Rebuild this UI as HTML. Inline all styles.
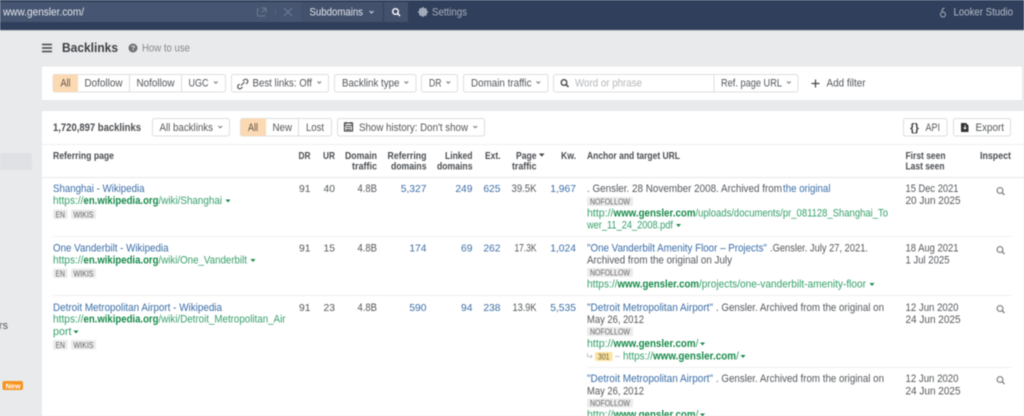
<!DOCTYPE html>
<html><head><meta charset="utf-8"><title>Backlinks</title>
<style>
html,body{margin:0;padding:0;width:1024px;height:416px;overflow:hidden;background:#e9eaec}
svg{display:block;filter:blur(.4px)}
text{font-family:"Liberation Sans",sans-serif;font-size:10.8px;fill:#54575b;white-space:pre}
.b{font-weight:bold}
.h{font-weight:bold;font-size:10px;fill:#4a4d51}
.l{fill:#3a6da6}
.g{fill:#36a06a}
.gb{fill:#17894a;font-weight:bold}
.t{font-size:8.5px;fill:#666}
.e{text-anchor:end}
.n{font-size:10.3px}
.btn{fill:#fff;stroke:#dcdee1;stroke-width:1}
.tag{fill:#ebebeb}
.sep{stroke:#eff0f1;stroke-width:1}
.ic{fill:none;stroke:#85888c;stroke-width:1.5}
</style></head><body>
<svg width="1024" height="416" viewBox="0 0 1024 416" xmlns="http://www.w3.org/2000/svg">
<!-- top bar -->
<rect width="1024" height="30" fill="#303f5b"/>
<rect y="30" width="1024" height="1" fill="#c9ccd2"/>
<rect y="2" width="301" height="20" fill="#465571"/>
<rect x="301" y="2" width="82" height="20" fill="#43516d"/>
<rect x="384" y="2" width="24" height="20" fill="#43516d"/>
<text x="3" y="15.500" textLength="81" style="font-size:11px;fill:#e6e9ee">www.gensler.com/</text>
<path d="M259 9h-1.500v7h7v-1.500M261 8h5v5M266 8l-4.500 4.500" fill="none" stroke="#6d7a92" stroke-width="1"/>
<path d="M284 8l8 8M292 8l-8 8" stroke="#6d7a92" stroke-width="1.200"/>
<rect x="275" y="9" width="1" height="6" fill="#55637e"/>
<text x="309.500" y="15.500" textLength="53.500" style="fill:#e3e6eb">Subdomains</text>
<path d="M369.500 11l2 2 2-2" fill="none" stroke="#d5d9e0" stroke-width="1"/>
<circle cx="395.500" cy="11.500" r="2.800" fill="none" stroke="#fff" stroke-width="1.400"/><path d="M397.500 13.500l2.500 2.500" stroke="#fff" stroke-width="1.500"/>
<circle cx="423" cy="12" r="3.200" fill="none" stroke="#a7afbd" stroke-width="2.200"/><path d="M423 7v10M418 12h10M419.500 8.500l7 7M426.500 8.500l-7 7" stroke="#a7afbd" stroke-width="1.200"/>
<text x="432" y="15.500" textLength="35" style="fill:#a7afbd">Settings</text>
<circle cx="943" cy="14.500" r="2.500" fill="none" stroke="#a7afbd" stroke-width="1"/><path d="M942 11.500c0-2 .5-3 2.500-3.500" fill="none" stroke="#a7afbd" stroke-width="1"/>
<text x="953.500" y="15.500" textLength="59.500" style="fill:#b4bbc7">Looker Studio</text>
<!-- sidebar -->
<rect x="0" y="153" width="32" height="17" rx="2" fill="#dfe1e4"/>
<text x="-1" y="329" style="fill:#55585c">rs</text>
<rect x="2.500" y="381" width="20.500" height="9" rx="2" fill="#f6931e"/>
<text x="5.500" y="388.500" textLength="15" class="b" style="font-size:7.500px;fill:#fff">New</text>
<!-- heading -->
<path d="M42 44.500h10M42 48h10M42 51.500h10" stroke="#444" stroke-width="1.400"/>
<text x="62" y="52" textLength="56" class="b" style="font-size:12.500px;fill:#3c3f43">Backlinks</text>
<circle cx="133" cy="48" r="4.500" fill="#6e7175"/><text x="131" y="50.500" class="b" style="font-size:7px;fill:#e9eaec">?</text>
<text x="142" y="51.500" textLength="48" style="fill:#85888c">How to use</text>
<!-- filter panel -->
<rect x="42" y="66.500" width="980" height="33.500" fill="#fff"/>
<rect x="53" y="74.500" width="172.500" height="17.500" rx="2" class="btn"/>
<rect x="53" y="74.500" width="25" height="17.500" rx="2" fill="#fbd9b3"/>
<path d="M129.500 75v17M181.500 75v17" stroke="#dcdee1"/>
<text x="60.500" y="86.500" textLength="10" style="fill:#5f5347">All</text>
<text x="84.500" y="86.500" textLength="38">Dofollow</text>
<text x="136.500" y="86.500" textLength="38">Nofollow</text>
<text x="188.500" y="86.500" textLength="20">UGC</text>
<path d="M214 81.500l1.800 1.800 1.800-1.800" fill="none" stroke="#666" stroke-width=".9"/>
<rect x="231.500" y="74.500" width="97" height="17.500" rx="2" class="btn"/>
<path d="M241 85.500l3.500-3.500M239.500 84l-1.200 1.200a2.100 2.100 0 0 0 3 3l1.200-1.200M243 81l1.200-1.200a2.100 2.100 0 0 1 3 3l-1.200 1.200" fill="none" stroke="#555" stroke-width="1.200"/>
<text x="252.500" y="86.500" textLength="59.500">Best links: Off</text>
<path d="M317.500 81.500l1.800 1.800 1.800-1.800" fill="none" stroke="#666" stroke-width=".9"/>
<rect x="334.500" y="74.500" width="81.500" height="17.500" rx="2" class="btn"/>
<text x="342" y="86.500" textLength="57.500">Backlink type</text>
<path d="M404.500 81.500l1.800 1.800 1.800-1.800" fill="none" stroke="#666" stroke-width=".9"/>
<rect x="421.500" y="74.500" width="36" height="17.500" rx="2" class="btn"/>
<text x="429" y="86.500" textLength="12.500">DR</text>
<path d="M446.500 81.500l1.800 1.800 1.800-1.800" fill="none" stroke="#666" stroke-width=".9"/>
<rect x="463.500" y="74.500" width="84.500" height="17.500" rx="2" class="btn"/>
<text x="471" y="86.500" textLength="60.500">Domain traffic</text>
<path d="M536.500 81.500l1.800 1.800 1.800-1.800" fill="none" stroke="#666" stroke-width=".9"/>
<rect x="553.500" y="74.500" width="244.500" height="17.500" rx="2" class="btn"/>
<path d="M714 75v17" stroke="#dcdee1"/>
<circle cx="564" cy="82.500" r="2.800" fill="none" stroke="#444" stroke-width="1.300"/><path d="M566 84.500l2.500 2.500" stroke="#444" stroke-width="1.500"/>
<text x="575" y="86.500" textLength="67" style="fill:#b5b7ba">Word or phrase</text>
<text x="721" y="86.500" textLength="61">Ref. page URL</text>
<path d="M787 81.500l1.800 1.800 1.800-1.800" fill="none" stroke="#666" stroke-width=".9"/>
<path d="M815.500 79.500v8M811.500 83.500h8" stroke="#444" stroke-width="1.200"/>
<text x="826.500" y="86.500" textLength="39">Add filter</text>
<!-- table panel -->
<rect x="42" y="111" width="982" height="305" fill="#fff"/>
<text x="53" y="131" textLength="88" class="b" style="fill:#4a4d51">1,720,897 backlinks</text>
<rect x="152.500" y="118.500" width="77" height="17.500" rx="2" class="btn"/>
<text x="159.500" y="131" textLength="53.500">All backlinks</text>
<path d="M218.500 126l1.800 1.800 1.800-1.800" fill="none" stroke="#666" stroke-width=".9"/>
<rect x="240.500" y="118.500" width="91" height="17.500" rx="2" class="btn"/>
<rect x="240.500" y="118.500" width="25.500" height="17.500" rx="2" fill="#fbd9b3"/>
<path d="M298.500 119v17" stroke="#dcdee1"/>
<text x="248" y="131" textLength="10" style="fill:#5f5347">All</text>
<text x="272.500" y="131" textLength="19.500">New</text>
<text x="306" y="131" textLength="18">Lost</text>
<rect x="337.500" y="118.500" width="147" height="17.500" rx="2" class="btn"/>
<rect x="344.500" y="123" width="8" height="8" fill="none" stroke="#444" stroke-width="1.200"/><path d="M344 125.500h9M346 122v2M351 122v2M346 127.500h5M346 129.500h5" stroke="#444" stroke-width="1"/>
<text x="359" y="131" textLength="109">Show history: Don't show</text>
<path d="M473.500 126l1.800 1.800 1.800-1.800" fill="none" stroke="#666" stroke-width=".9"/>
<rect x="903.500" y="118.500" width="43.500" height="17.500" rx="2" class="btn"/>
<text x="910" y="131" textLength="9" class="b" style="font-size:11px;fill:#444">{}</text>
<text x="925.500" y="131" textLength="14.500">API</text>
<rect x="953.500" y="118.500" width="57" height="17.500" rx="2" class="btn"/>
<path d="M961 123h5l2.500 2.500v6.500h-7.500z" fill="#333"/><path d="M965 125v3.500M963.500 127.500l1.500 1.500 1.500-1.500" stroke="#fff" fill="none" stroke-width=".8"/>
<text x="975.500" y="131" textLength="28.500">Export</text>
<path d="M42 144.500h982" class="sep"/>
<!-- headers -->
<text x="53" y="159" textLength="61" class="h">Referring page</text>
<text x="298.500" y="159" textLength="12" class="h">DR</text>
<text x="323" y="159" textLength="12" class="h">UR</text>
<text x="345" y="159" textLength="32" class="h">Domain</text><text x="352" y="169.500" textLength="25" class="h">traffic</text>
<text x="387.500" y="159" textLength="39" class="h">Referring</text><text x="391" y="169.500" textLength="35.500" class="h">domains</text>
<text x="445" y="159" textLength="27.500" class="h">Linked</text><text x="437" y="169.500" textLength="35.500" class="h">domains</text>
<text x="485" y="159" textLength="15.500" class="h">Ext.</text>
<text x="516" y="159" textLength="20.500" class="h">Page</text><path d="M539 153.500h5.500l-2.750 3.200z" fill="#444"/><text x="512" y="169.500" textLength="24.500" class="h">traffic</text>
<text x="561" y="159" textLength="15" class="h">Kw.</text>
<text x="587" y="159" textLength="93" class="h">Anchor and target URL</text>
<text x="905.500" y="159" textLength="40" class="h">First seen</text><text x="905.500" y="169.500" textLength="39" class="h">Last seen</text>
<text x="980" y="159" textLength="31" class="h">Inspect</text>
<path d="M42 177.500h982" stroke="#e6e7e9"/>
<path d="M53 236.500h959M53 295.500h959M587 367.500h425" class="sep"/>

<!-- Row 1 -->
<text x="53" y="192" textLength="91.500" class="l">Shanghai - Wikipedia</text>
<text x="53" y="204" textLength="30.500" class="g">https://</text><text x="83.500" y="204" textLength="75" class="gb">en.wikipedia.org</text><text x="158.500" y="204" textLength="63.500" class="g">/wiki/Shanghai</text>
<path d="M225.500 199.500h5l-2.500 3z" fill="#17894a"/>
<rect x="53" y="209.500" width="14.500" height="9.500" rx="1.500" class="tag"/><text x="55.500" y="217.500" textLength="9.500" class="t">EN</text>
<rect x="71" y="209.500" width="25" height="9.500" rx="1.500" class="tag"/><text x="73.500" y="217.500" textLength="20" class="t">WIKIS</text>
<text x="310.500" y="192" class="e n">91</text><text x="335" y="192" class="e n">40</text><text x="377" y="192" textLength="19.500" class="e">4.8B</text>
<text x="426.500" y="192" class="l e n">5,327</text><text x="472.500" y="192" class="l e n">249</text><text x="500.500" y="192" class="l e n">625</text>
<text x="536.500" y="192" textLength="25" class="e">39.5K</text><text x="576" y="192" class="l e n">1,967</text>
<text x="587" y="192" textLength="195">. Gensler. 28 November 2008. Archived from</text><text x="783" y="192" textLength="47.500" class="l">the original</text>
<rect x="587" y="197" width="46" height="9" rx="1.500" class="tag"/><text x="590" y="204.500" textLength="40" class="t">NOFOLLOW</text>
<text x="587" y="216.500" textLength="26.500" class="g">http://</text><text x="613.500" y="216.500" textLength="82" class="gb">www.gensler.com</text><text x="695.500" y="216.500" textLength="192.500" class="g">/uploads/documents/pr_081128_Shanghai_To</text>
<text x="587" y="228.500" textLength="86" class="g">wer_11_24_2008.pdf</text><path d="M676 224h5l-2.500 3z" fill="#17894a"/>
<text x="905.500" y="192" textLength="53">15 Dec 2021</text><text x="905.500" y="204" textLength="55">20 Jun 2025</text>
<circle cx="1000" cy="190.500" r="2.900" fill="none" stroke="#85888c" stroke-width="1.300"/><path d="M1002 192.500l2.500 2.500" class="ic"/>

<!-- Row 2 -->
<text x="53" y="251.500" textLength="115.500" class="l">One Vanderbilt - Wikipedia</text>
<text x="53" y="263.500" textLength="30.500" class="g">https://</text><text x="83.500" y="263.500" textLength="75" class="gb">en.wikipedia.org</text><text x="158.500" y="263.500" textLength="88.500" class="g">/wiki/One_Vanderbilt</text>
<path d="M250.500 259h5l-2.500 3z" fill="#17894a"/>
<rect x="53" y="268.500" width="14.500" height="9.500" rx="1.500" class="tag"/><text x="55.500" y="276.500" textLength="9.500" class="t">EN</text>
<rect x="71" y="268.500" width="25" height="9.500" rx="1.500" class="tag"/><text x="73.500" y="276.500" textLength="20" class="t">WIKIS</text>
<text x="310.500" y="251.500" class="e n">91</text><text x="335" y="251.500" class="e n">15</text><text x="377" y="251.500" textLength="19.500" class="e">4.8B</text>
<text x="426.500" y="251.500" class="l e n">174</text><text x="472.500" y="251.500" class="l e n">69</text><text x="500.500" y="251.500" class="l e n">262</text>
<text x="536.500" y="251.500" textLength="22" class="e">17.3K</text><text x="576" y="251.500" class="l e n">1,024</text>
<text x="587" y="251.500" textLength="180" class="l">"One Vanderbilt Amenity Floor – Projects"</text><text x="770" y="251.500" textLength="98">.Gensler. July 27, 2021.</text>
<text x="587" y="263.500" textLength="145">Archived from the original on July</text>
<rect x="587" y="268" width="46" height="9" rx="1.500" class="tag"/><text x="590" y="275.500" textLength="40" class="t">NOFOLLOW</text>
<text x="587" y="287.500" textLength="30.500" class="g">https://</text><text x="617.500" y="287.500" textLength="81.500" class="gb">www.gensler.com</text><text x="699" y="287.500" textLength="167" class="g">/projects/one-vanderbilt-amenity-floor</text>
<path d="M869.500 283h5l-2.500 3z" fill="#17894a"/>
<text x="905.500" y="251.500" textLength="53">18 Aug 2021</text><text x="905.500" y="263.500" textLength="44">1 Jul 2025</text>
<circle cx="1000" cy="249.500" r="2.900" fill="none" stroke="#85888c" stroke-width="1.300"/><path d="M1002 251.500l2.500 2.500" class="ic"/>

<!-- Row 3 -->
<text x="53" y="311" textLength="169" class="l">Detroit Metropolitan Airport - Wikipedia</text>
<text x="53" y="322.500" textLength="30.500" class="g">https://</text><text x="83.500" y="322.500" textLength="75" class="gb">en.wikipedia.org</text><text x="158.500" y="322.500" textLength="127" class="g">/wiki/Detroit_Metropolitan_Air</text>
<text x="53" y="335" textLength="18.500" class="g">port</text><path d="M73.500 330.500h5l-2.500 3z" fill="#17894a"/>
<rect x="53" y="340" width="14.500" height="9.500" rx="1.500" class="tag"/><text x="55.500" y="348" textLength="9.500" class="t">EN</text>
<rect x="71" y="340" width="25" height="9.500" rx="1.500" class="tag"/><text x="73.500" y="348" textLength="20" class="t">WIKIS</text>
<text x="310.500" y="311" class="e n">91</text><text x="335" y="311" class="e n">23</text><text x="377" y="311" textLength="19.500" class="e">4.8B</text>
<text x="426.500" y="311" class="l e n">590</text><text x="472.500" y="311" class="l e n">94</text><text x="500.500" y="311" class="l e n">238</text>
<text x="536.500" y="311" textLength="24" class="e">13.9K</text><text x="576" y="311" class="l e n">5,535</text>
<text x="587" y="311" textLength="126" class="l">"Detroit Metropolitan Airport"</text><text x="716" y="311" textLength="168">. Gensler. Archived from the original on</text>
<text x="587" y="323" textLength="57">May 26, 2012</text>
<rect x="587" y="327" width="46" height="9" rx="1.500" class="tag"/><text x="590" y="334.500" textLength="40" class="t">NOFOLLOW</text>
<text x="587" y="347" textLength="26.500" class="g">http://</text><text x="613.500" y="347" textLength="82" class="gb">www.gensler.com</text><text x="695.500" y="347" class="g">/</text>
<path d="M700 342.500h5l-2.500 3z" fill="#17894a"/>
<path d="M587.500 353v3.500h4.500M590.500 355l1.500 1.500-1.500 1.500" fill="none" stroke="#b5b7ba" stroke-width=".8"/>
<rect x="595" y="352" width="17.500" height="9" rx="2" fill="#fbe3a0"/><text x="598" y="359.500" textLength="11.500" style="font-size:8.500px;fill:#6a5f3f">301</text>
<path d="M615 356.500h5" stroke="#b5b7ba" stroke-width=".8"/>
<text x="623" y="359.500" textLength="30" class="g">https://</text><text x="653" y="359.500" textLength="83" class="gb">www.gensler.com</text><text x="736" y="359.500" class="g">/</text>
<path d="M740.500 355h5l-2.500 3z" fill="#17894a"/>
<text x="905.500" y="311" textLength="53">12 Jun 2020</text><text x="905.500" y="323" textLength="55">24 Jun 2025</text>
<circle cx="1000" cy="308.500" r="2.900" fill="none" stroke="#85888c" stroke-width="1.300"/><path d="M1002 310.500l2.500 2.500" class="ic"/>

<!-- Row 4 -->
<text x="587" y="382" textLength="126" class="l">"Detroit Metropolitan Airport"</text><text x="716" y="382" textLength="168">. Gensler. Archived from the original on</text>
<text x="587" y="394.500" textLength="57">May 26, 2012</text>
<rect x="587" y="398.500" width="46" height="9" rx="1.500" class="tag"/><text x="590" y="406" textLength="40" class="t">NOFOLLOW</text>
<text x="587" y="418" textLength="26.500" class="g">http://</text><text x="613.500" y="418" textLength="82" class="gb">www.gensler.com</text><text x="695.500" y="418" class="g">/</text>
<path d="M700 413.500h5l-2.500 3z" fill="#17894a"/>
<text x="905.500" y="382" textLength="53">12 Jun 2020</text><text x="905.500" y="394.500" textLength="55">24 Jun 2025</text>
<circle cx="1000" cy="379.500" r="2.900" fill="none" stroke="#85888c" stroke-width="1.300"/><path d="M1002 381.500l2.500 2.500" class="ic"/>
</svg>
<script>document.querySelectorAll('text[textLength]').forEach(function(t){t.setAttribute('lengthAdjust','spacingAndGlyphs')});</script>
</body></html>
